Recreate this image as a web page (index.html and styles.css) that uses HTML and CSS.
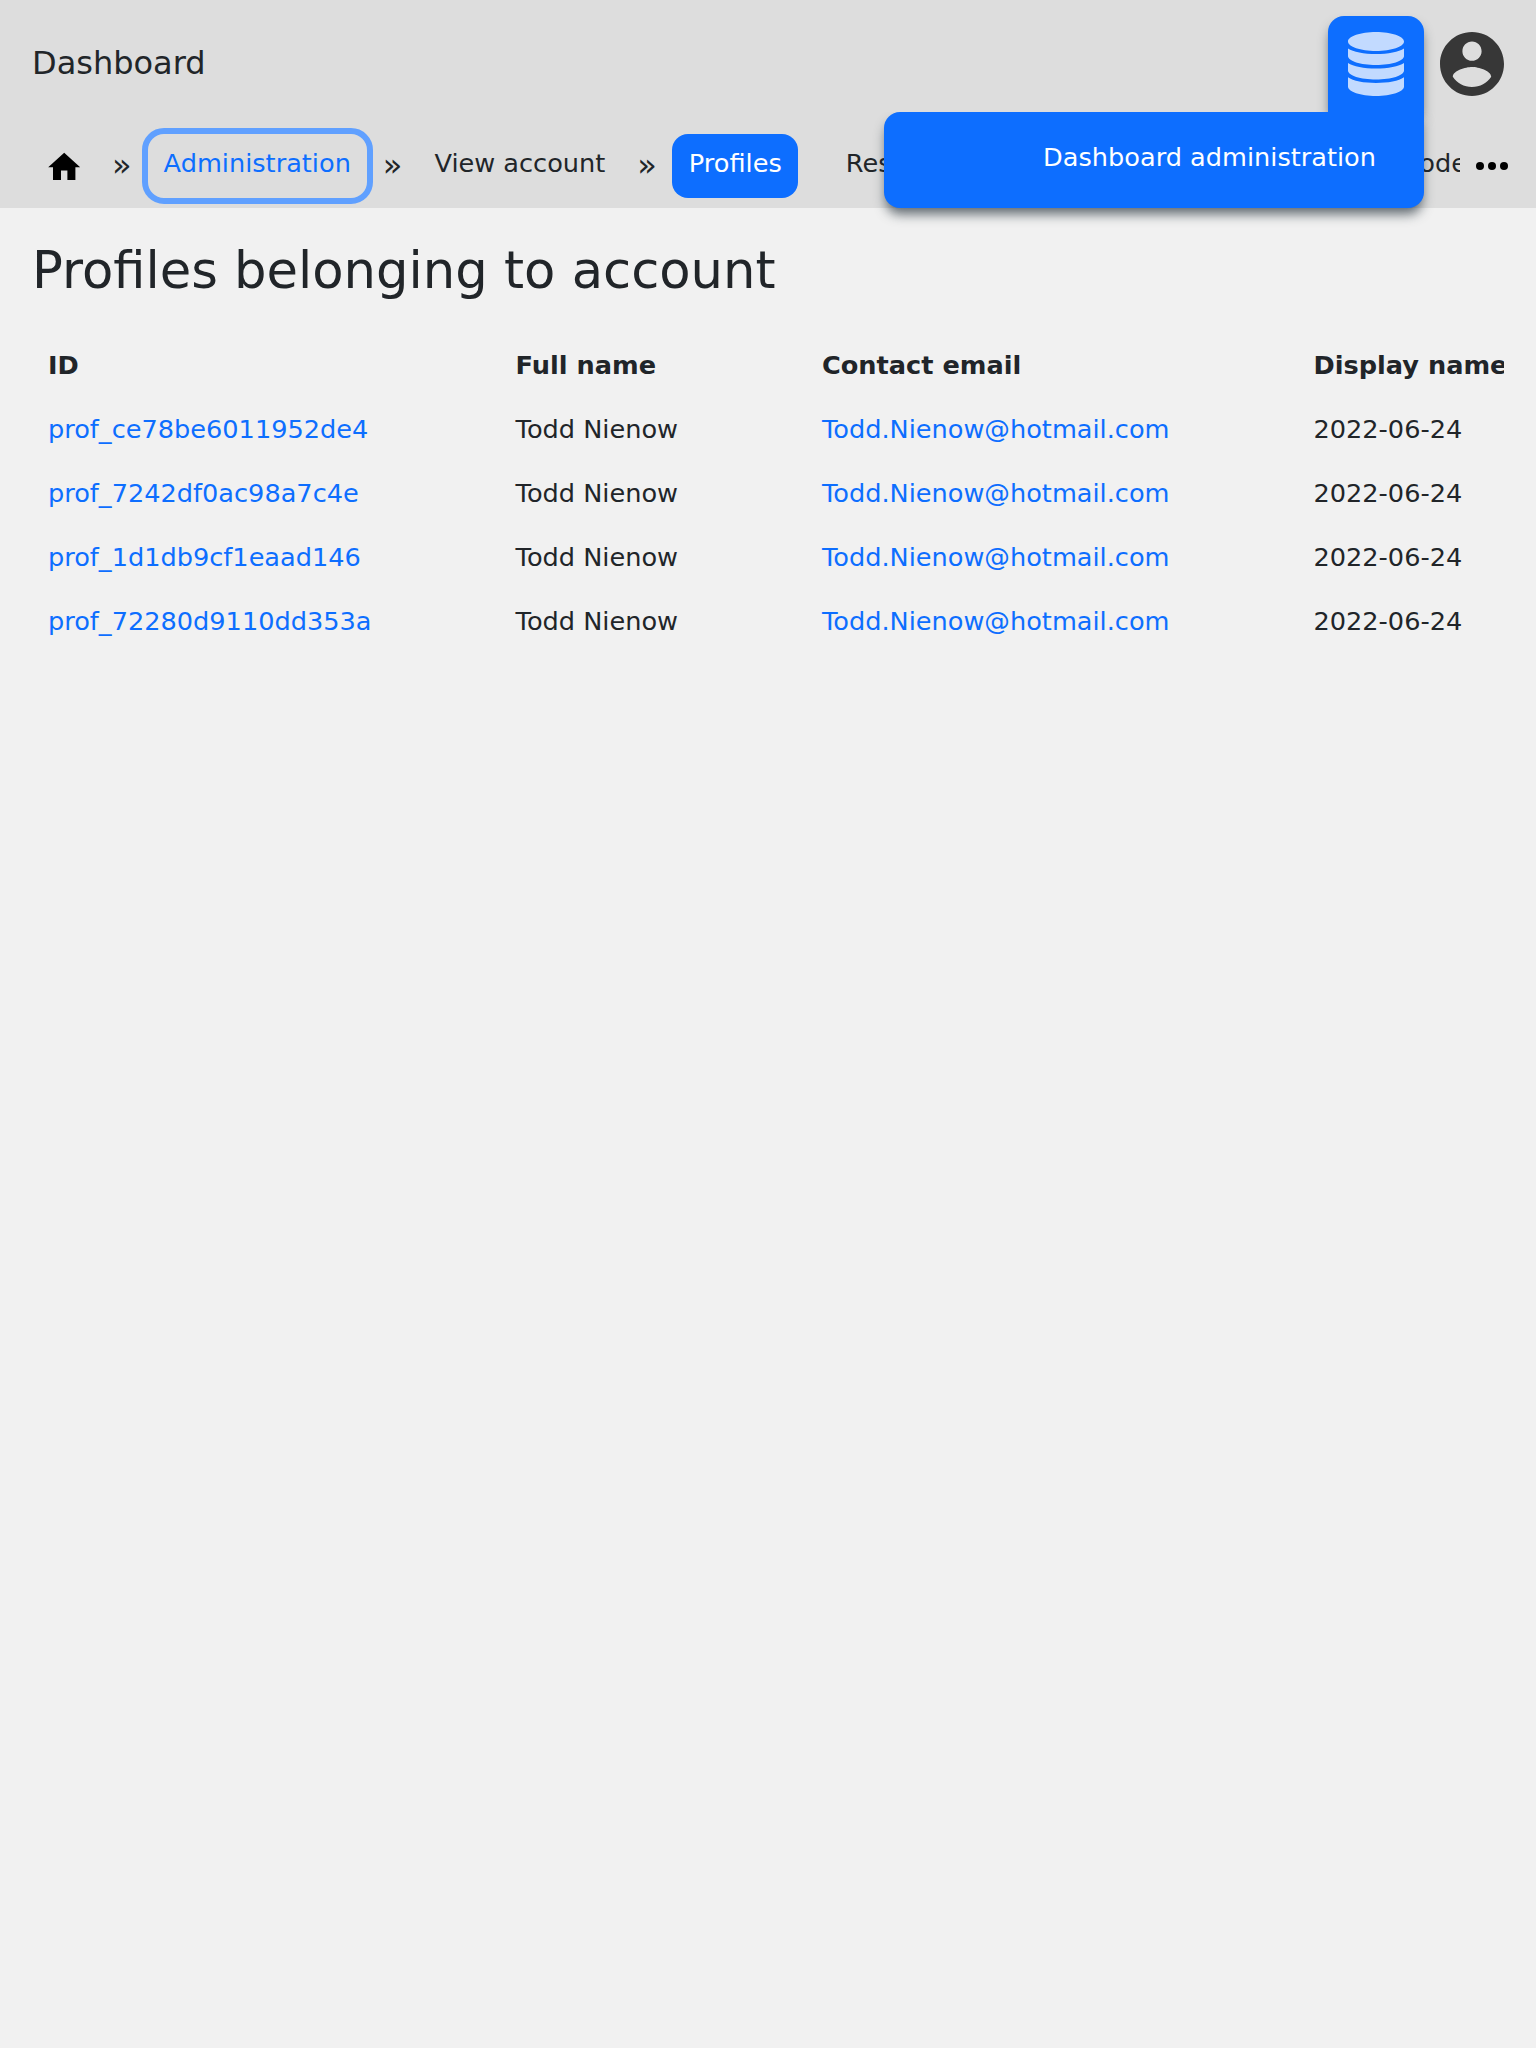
FILE: index.html
```html
<!DOCTYPE html>
<html lang="en">
<head>
<meta charset="utf-8">
<title>Dashboard</title>
<link rel="stylesheet" href="styles.css">
</head>
<body>
<header class="header">
  <div class="topbar">
    <div class="title">Dashboard</div>
    <div class="actions">
      <div class="admin-menu">
        <svg class="database-icon" viewBox="0 0 56 64"><path d="M0 9.500C0 4.300 12.500 0 28 0s28 4.300 28 9.500C56 14.700 43.500 19 28 19S0 14.700 0 9.500zM0 16.500C5 20 16 22 28 22s23-2 28-5.500V24c0 5-12.500 9-28 9S0 29 0 24zM0 31c5 3.500 16 5.500 28 5.500S51 34.500 56 31v7.500c0 5-12.500 9-28 9s-28-4-28-9zM0 45.300C5 49 16 51 28 51s23-2 28-5.700V54.500c0 5.200-12.500 9.500-28 9.500S0 59.700 0 54.500z"/></svg>
        <div class="menu-panel"><a class="menu-link">Dashboard administration</a></div>
      </div>
      <svg class="account-icon" viewBox="2 2 20 20"><path d="M12 2C6.480 2 2 6.480 2 12s4.480 10 10 10 10-4.480 10-10S17.520 2 12 2zm0 3c1.660 0 3 1.340 3 3s-1.340 3-3 3-3-1.340-3-3 1.340-3 3-3zm0 14.200c-2.500 0-4.710-1.280-6-3.220.030-1.990 4-3.080 6-3.080 1.990 0 5.970 1.090 6 3.080-1.290 1.940-3.500 3.220-6 3.220z"/></svg>
    </div>
  </div>
  <nav class="nav">
    <div class="crumbs">
      <a class="crumb home"><svg viewBox="0 0 24 24"><path d="M10 20v-6h4v6h5v-8h3L12 3 2 12h3v8z"/></svg></a>
      <span class="sep">»</span>
      <a class="crumb focused">Administration</a>
      <span class="sep">»</span>
      <a class="crumb">View account</a>
      <span class="sep">»</span>
      <a class="crumb current">Profiles</a>
      <a class="crumb tab">Reset password</a>
      <a class="crumb tab last">Reset code</a>
    </div>
    <svg class="more" viewBox="0 0 24 24"><circle cx="6" cy="12" r="2"/><circle cx="12" cy="12" r="2"/><circle cx="18" cy="12" r="2"/></svg>
  </nav>
</header>
<main class="content">
  <h1>Profiles belonging to account</h1>
  <div class="table-wrap">
    <table>
      <thead><tr><th class="c-id">ID</th><th class="c-name">Full name</th><th class="c-mail">Contact email</th><th class="c-display">Display name</th></tr></thead>
      <tbody>
        <tr><td><a>prof_ce78be6011952de4</a></td><td>Todd Nienow</td><td><a>Todd.Nienow@hotmail.com</a></td><td>2022-06-24</td></tr>
        <tr><td><a>prof_7242df0ac98a7c4e</a></td><td>Todd Nienow</td><td><a>Todd.Nienow@hotmail.com</a></td><td>2022-06-24</td></tr>
        <tr><td><a>prof_1d1db9cf1eaad146</a></td><td>Todd Nienow</td><td><a>Todd.Nienow@hotmail.com</a></td><td>2022-06-24</td></tr>
        <tr><td><a>prof_72280d9110dd353a</a></td><td>Todd Nienow</td><td><a>Todd.Nienow@hotmail.com</a></td><td>2022-06-24</td></tr>
      </tbody>
    </table>
  </div>
</main>
</body>
</html>
```
FILE: styles.css
```css
* { box-sizing: border-box; }
body {
  margin: 0;
  min-height: 100vh;
  background: #f1f1f1;
  color: #212529;
  font-family: "DejaVu Sans", sans-serif;
  font-size: 25.6px;
  line-height: 32px;
}
a { color: #0d6eff; text-decoration: none; }
.header { height: 208px; background: #ddd; }
.topbar {
  display: flex;
  justify-content: space-between;
  height: 128px;
  padding: 16px 32px 0;
}
.title { font-size: 32px; line-height: 94px; }
.actions { display: flex; gap: 16px; }
.admin-menu {
  position: relative;
  width: 96px;
  height: 96px;
  padding: 16px 20px;
  background: #0d6eff;
  border-radius: 16px 16px 0 0;
  box-shadow: 0 8px 12px -2px rgba(33, 45, 56, .7);
}
.database-icon { display: block; width: 56px; height: 64px; fill: #fff; opacity: .75; }
.menu-panel {
  position: absolute;
  z-index: 1;
  top: 96px;
  right: 0;
  width: 540px;
  height: 96px;
  padding: 29px 48px;
  background: #0d6eff;
  border-radius: 16px 0 16px 16px;
  box-shadow: 0 8px 12px -2px rgba(33, 45, 56, .7);
  clip-path: inset(0 -30px -30px -30px);
  text-align: right;
}
.menu-link { color: #fff; }
.account-icon { width: 64px; height: 64px; margin-top: 16px; fill: #373737; }
.nav { display: flex; height: 80px; padding: 0 20px 0 32px; }
.crumbs {
  display: flex;
  flex: 1;
  height: 80px;
  margin-right: 8px;
  overflow: hidden;
  white-space: nowrap;
}
.crumb {
  flex: none;
  height: 64px;
  margin-top: 6px;
  padding: 13px 16px;
  border-radius: 16px;
  color: #212529;
}
.home { width: 64px; }
.home svg { display: block; width: 38.4px; height: 38.4px; margin: .8px 0 0 -3.2px; }
.sep { flex: none; padding: 21px 16px 0; font-size: 32px; }
.focused { color: #0d6eff; outline: 6px solid #60a0ff; }
.current { margin-left: -.8px; padding-left: 16.8px; background: #0d6eff; color: #fff; }
.tab { margin-left: 32px; }
.last { margin-left: auto; margin-right: -23px; }
.more { flex: none; width: 48px; height: 48px; margin-top: 14px; }
.content { padding: 32px; }
h1 { margin: 0; font-size: 51.2px; font-weight: 400; line-height: 60px; }
.table-wrap { margin-top: 33px; overflow: hidden; }
table { width: 1560px; border-collapse: collapse; table-layout: fixed; }
th, td { height: 64px; padding: 0 16px; text-align: left; white-space: nowrap; }
.c-id { width: 467.6px; }
.c-name { width: 306.4px; }
.c-mail { width: 491.5px; }
```
